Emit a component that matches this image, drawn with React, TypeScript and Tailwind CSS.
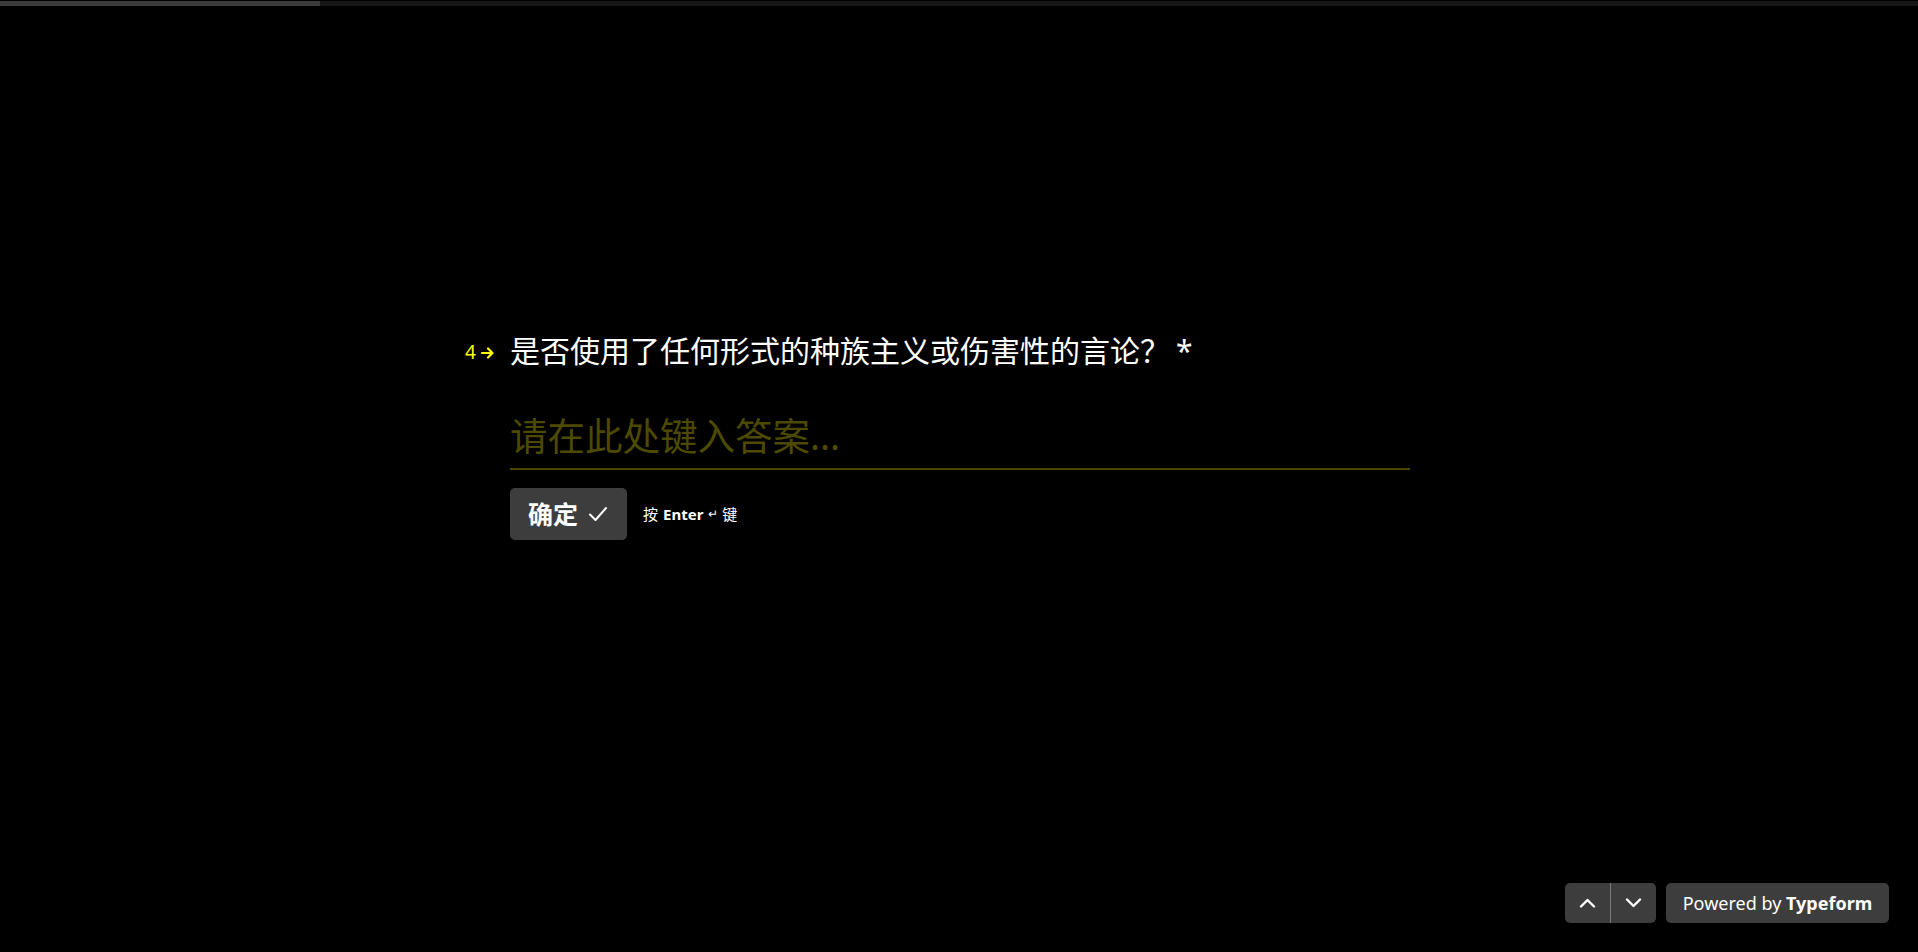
import React from "react";

const cjk = { fontFamily: '"Noto Sans", "Noto Sans CJK SC", sans-serif' };

export default function App() {
  return (
    <div
      className="relative flex h-[952px] w-full flex-col overflow-hidden bg-black text-white"
      style={cjk}
    >
      {/* progress bar */}
      <div className="pt-px">
        <div className="flex h-[5px] w-full bg-[#161616]">
          <div className="h-full w-[320px] bg-[#3b3b3b]" />
        </div>
      </div>

      {/* question block */}
      <div className="ml-[465px] flex pt-[325px]">
        <div className="flex h-[40px] w-[45px] items-center pt-[3px] text-[#ffff00]">
          <span className="text-[19px] leading-none">4</span>
          <svg
            className="ml-[5px]"
            width="13"
            height="12"
            viewBox="0 0 13 12"
            fill="none"
            stroke="#ffff00"
            strokeWidth="2.2"
            strokeLinecap="round"
            strokeLinejoin="round"
          >
            <path d="M1 6h10.5M7 1.5L11.5 6 7 10.5" />
          </svg>
        </div>
        <div className="flex w-[900px] flex-col">
          <div className="text-[30px] leading-[40px]">
            是否使用了任何形式的种族主义或伤害性的言论？<span className="ml-[6px]">*</span>
          </div>
          <div className="mt-[40px] border-b-2 border-[#4a4800] pb-[7px] text-[37.5px] leading-[50px] text-[#4d4a00]">
            请在此处键入答案...
          </div>
          <div className="mt-[18px] flex items-center">
            <button className="flex h-[52px] w-[117px] items-center rounded-[5px] bg-[#3d3d3d] pl-[18px] text-[25px] font-bold text-white">
              <span className="leading-none">确定</span>
              <svg
                className="ml-[10px]"
                width="20"
                height="16"
                viewBox="0 0 20 16"
                fill="none"
                stroke="white"
                strokeWidth="2"
                strokeLinecap="round"
                strokeLinejoin="round"
              >
                <path d="M2 8.5l5.5 5.5L18 2" />
              </svg>
            </button>
            <div className="ml-[16px] flex items-center text-[15px] text-white">
              <span>按</span>
              <span className="ml-[5px] font-bold">Enter</span>
              <span className="ml-[5px] text-[12px]">↵</span>
              <span className="ml-[4px]">键</span>
            </div>
          </div>
        </div>
      </div>

      {/* bottom right controls */}
      <div className="absolute bottom-[29px] right-[29px] flex h-[40px] gap-[10px]">
        <div className="flex h-full w-[91px] overflow-hidden rounded-[5px] bg-[#3d3d3d]">
          <div className="flex w-[45px] items-center justify-center">
            <svg width="17" height="10" viewBox="0 0 17 10" fill="none" stroke="white" strokeWidth="2.4" strokeLinecap="round" strokeLinejoin="round">
              <path d="M2 8.5L8.5 2 15 8.5" />
            </svg>
          </div>
          <div className="w-px bg-[#7a7a7a]" />
          <div className="flex flex-1 items-center justify-center">
            <svg width="17" height="10" viewBox="0 0 17 10" fill="none" stroke="white" strokeWidth="2.4" strokeLinecap="round" strokeLinejoin="round">
              <path d="M2 1.5L8.5 8 15 1.5" />
            </svg>
          </div>
        </div>
        <div className="flex h-full w-[223px] items-center justify-center rounded-[5px] bg-[#3d3d3d] text-[18px] text-white">
          <span>Powered by&nbsp;</span>
          <span className="font-bold">Typeform</span>
        </div>
      </div>
    </div>
  );
}
